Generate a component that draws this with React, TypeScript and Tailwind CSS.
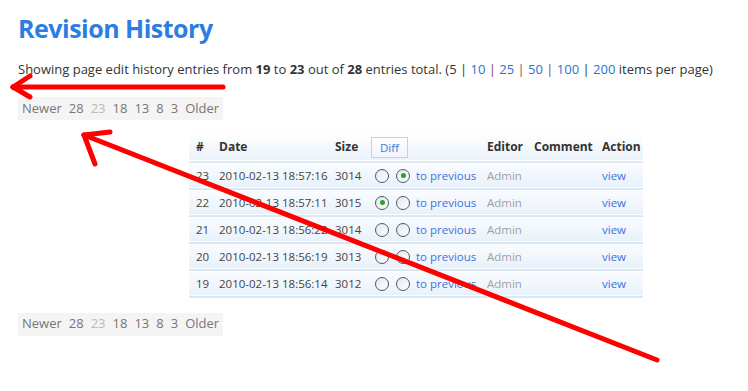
import React from 'react';

interface Rev {
  id: number;
  date: string;
  size: number;
  left: boolean;
  right: boolean;
}

const revisions: Rev[] = [
  { id: 23, date: '2010-02-13 18:57:16', size: 3014, left: false, right: true },
  { id: 22, date: '2010-02-13 18:57:11', size: 3015, left: true, right: false },
  { id: 21, date: '2010-02-13 18:56:22', size: 3014, left: false, right: false },
  { id: 20, date: '2010-02-13 18:56:19', size: 3013, left: false, right: false },
  { id: 19, date: '2010-02-13 18:56:14', size: 3012, left: false, right: false },
];

function Radio({ checked }: { checked: boolean }) {
  return (
    <span className="inline-flex items-center justify-center w-[14px] h-[14px] rounded-full border border-[#4a5868] bg-gradient-to-br from-[#e4e8ec] to-white">
      {checked && <span className="w-[5px] h-[5px] rounded-full bg-[#2aa12a]" />}
    </span>
  );
}

function Pager() {
  return (
    <div className="inline-flex items-center gap-[7px] bg-[#f4f4f4] px-[4px] h-[23px] text-[13px] text-[#777]">
      <span>Newer</span>
      <span>28</span>
      <span className="text-[#bbb]">23</span>
      <span>18</span>
      <span>13</span>
      <span>8</span>
      <span>3</span>
      <span>Older</span>
    </div>
  );
}

const sep = <span className="text-[#8b3a62]"> | </span>;

export default function App() {
  return (
    <div className="relative w-[748px] h-[391px] bg-white overflow-hidden text-[#333] font-['Open_Sans',sans-serif]">
      <div className="pl-[18px] pt-[10px]">
        <h1 className="text-[25px] font-bold text-[#2b7de1] leading-[36px] tracking-[-0.5px]">Revision History</h1>
        <p className="mt-[14px] text-[13px] leading-[18px] whitespace-nowrap">
          Showing page edit history entries from <b>19</b> to <b>23</b> out of <b>28</b> entries total. (5
          <span className="text-[#333]"> | </span>
          <span className="text-[#1d74d8]">10</span>
          {sep}
          <span className="text-[#1d74d8]">25</span>
          {sep}
          <span className="text-[#1d74d8]">50</span>
          {sep}
          <span className="text-[#1d74d8]">100</span>
          <span className="text-[#333]"> | </span>
          <span className="text-[#1d74d8]">200</span> items per page)
        </p>

        <div className="mt-[17px]">
          <Pager />
        </div>

        <table className="ml-[171px] mt-[13px] border-collapse table-fixed w-[454px] text-[11.5px] leading-none whitespace-nowrap">
          <thead>
            <tr className="h-[29px] bg-gradient-to-b from-white to-[#eaf2fa] border-b-[2px] border-[#dce9f5] text-left text-[#333] text-[12px]">
              <th className="w-[23px] pl-[7px] font-bold">#</th>
              <th className="w-[116px] pl-[7px] font-bold">Date</th>
              <th className="w-[36px] pl-[7px] font-bold">Size</th>
              <th className="w-[116px] pl-[7px] font-normal">
                <span className="inline-flex items-center justify-center w-[37px] h-[21px] border border-[#bcd4ea] bg-gradient-to-b from-white to-[#eef4fa] text-[#3a7ad8] text-[11.5px]">
                  Diff
                </span>
              </th>
              <th className="w-[47px] pl-[7px] font-bold">Editor</th>
              <th className="w-[68px] pl-[7px] font-bold">Comment</th>
              <th className="w-[48px] pl-[7px] font-bold">Action</th>
            </tr>
          </thead>
          <tbody>
            {revisions.map((r) => (
              <tr
                key={r.id}
                className="h-[27px] bg-gradient-to-b from-[#fbfdff] to-[#e8f1fa] border-b-[2px] border-[#dae8f5]"
              >
                <td className="pl-[7px] text-[#444]">{r.id}</td>
                <td className="pl-[7px] text-[#444]">{r.date}</td>
                <td className="pl-[7px] text-[#444]">{r.size}</td>
                <td className="pl-[11px]">
                  <div className="flex items-center">
                    <Radio checked={r.left} />
                    <span className="ml-[7px] flex">
                      <Radio checked={r.right} />
                    </span>
                    <span className="ml-[6px] text-[#3f6fe0]">to previous</span>
                  </div>
                </td>
                <td className="pl-[7px] text-[#a0a0a0]">Admin</td>
                <td />
                <td className="pl-[7px] text-[#3f6fe0]">view</td>
              </tr>
            ))}
          </tbody>
        </table>

        <div className="mt-[12px]">
          <Pager />
        </div>
      </div>

      {/* red annotation arrows */}
      <svg className="absolute inset-0 pointer-events-none" width="748" height="391">
        <g stroke="#ff0000" strokeWidth="5" strokeLinecap="round" fill="none">
          <line x1="223" y1="87" x2="13" y2="87" />
          <line x1="13" y1="87" x2="30" y2="76" />
          <line x1="13" y1="87" x2="30" y2="97" />
          <line x1="657" y1="360" x2="84" y2="135" />
          <line x1="84" y1="135" x2="110" y2="132" />
          <line x1="84" y1="135" x2="95" y2="164" />
        </g>
      </svg>
    </div>
  );
}
